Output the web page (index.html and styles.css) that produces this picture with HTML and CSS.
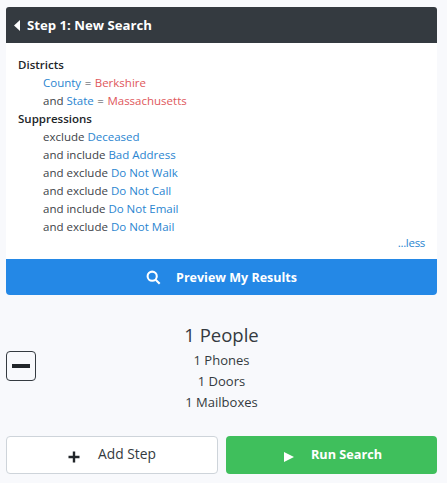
FILE: index.html
```html
<!DOCTYPE html>
<html lang="en">
<head>
<meta charset="utf-8">
<title>Step 1: New Search</title>
<link rel="stylesheet" href="styles.css">
</head>
<body>
<main class="page">
  <section class="card">
    <header class="card-head">
      <svg class="back" viewBox="0 0 6 11" aria-hidden="true"><path d="M6 0v11L0 5.5z"/></svg>
      <span>Step 1: New Search</span>
    </header>
    <div class="card-body">
      <div class="group-title">Districts</div>
      <div class="row"><a class="field">County</a><span class="eq">=</span><span class="val">Berkshire</span></div>
      <div class="row">and <a class="field">State</a><span class="eq">=</span><span class="val">Massachusetts</span></div>
      <div class="group-title">Suppressions</div>
      <div class="row">exclude <a class="field">Deceased</a></div>
      <div class="row">and include <a class="field">Bad Address</a></div>
      <div class="row">and exclude <a class="field">Do Not Walk</a></div>
      <div class="row">and exclude <a class="field">Do Not Call</a></div>
      <div class="row">and include <a class="field">Do Not Email</a></div>
      <div class="row">and exclude <a class="field">Do Not Mail</a></div>
      <div class="less"><a class="field">...less</a></div>
    </div>
    <button class="preview">
      <svg class="search" viewBox="0 0 16 16" aria-hidden="true"><circle cx="6.6" cy="6.6" r="4.9"/><path d="M10.3 10.3l4.3 4.3"/></svg>
      <span>Preview My Results</span>
    </button>
  </section>
  <section class="results">
    <button class="collapse" aria-label="Collapse"><span class="bar"></span></button>
    <div class="stats">
      <div class="people">1 People</div>
      <div class="stat">1 Phones</div>
      <div class="stat">1 Doors</div>
      <div class="stat">1 Mailboxes</div>
    </div>
  </section>
  <section class="actions">
    <button class="btn add">
      <svg class="plus" viewBox="0 0 12 12" aria-hidden="true"><path d="M6 .5v11M.5 6h11"/></svg>
      <span>Add Step</span>
    </button>
    <button class="btn run">
      <svg class="play" viewBox="0 0 10 10" aria-hidden="true"><path d="M0 0l10 5-10 5z"/></svg>
      <span>Run Search</span>
    </button>
  </section>
</main>
</body>
</html>
```
FILE: styles.css
```css
* { box-sizing: border-box; }
html, body { margin: 0; height: 100%; }
body {
  background: #f8f9fc;
  color: #343a40;
  font-family: "Open Sans", "Noto Sans", sans-serif;
  font-size: 11.5px;
  overflow: hidden;
}
button { font-family: inherit; cursor: pointer; }
.page { padding: 7px 10px 0 6px; }
.card-head {
  height: 36px;
  background: #343a40;
  color: #fff;
  font-size: 13.2px;
  font-weight: 700;
  display: flex;
  align-items: center;
  gap: 7px;
  padding-left: 8px;
  border-radius: 3px 3px 0 0;
}
.back { width: 6px; height: 11px; fill: #fff; }
.card-body {
  background: #fff;
  padding: 13px 12px 6px 12px;
  height: 216px;
  line-height: 18px;
}
.group-title { font-weight: 600; color: #212529; }
.row { padding-left: 25px; color: #3c4248; }
.field { color: #2a85d0; }
.eq { margin: 0 3.5px; }
.val { color: #e0575b; }
.less { text-align: right; margin-top: -2px; letter-spacing: -0.3px; }
.preview {
  width: 100%;
  height: 36px;
  background: #2488e6;
  border: 0;
  border-radius: 0 0 4px 4px;
  color: #fff;
  font-size: 12.5px;
  font-weight: 700;
  display: flex;
  align-items: center;
  justify-content: center;
  gap: 15px;
}
.search { width: 15px; height: 15px; fill: none; stroke: #fff; stroke-width: 2.2; }
.results { position: relative; padding-top: 28px; height: 141px; }
.collapse {
  position: absolute;
  left: 0;
  top: 56px;
  width: 30px;
  height: 30px;
  background: transparent;
  border: 1px solid #343a40;
  border-radius: 4px;
  padding: 0;
  display: flex;
  align-items: center;
  justify-content: center;
}
.bar { width: 18px; height: 4px; background: #212529; }
.stats { text-align: center; }
.people { font-size: 18.5px; line-height: 24px; margin-bottom: 3px; }
.stat { font-size: 13px; line-height: 21px; }
.actions { display: grid; grid-template-columns: 212px 211px; gap: 8px; }
.btn {
  height: 38px;
  border-radius: 4px;
  font-size: 13.8px;
  display: flex;
  align-items: center;
  justify-content: center;
  padding-bottom: 4px;
}
.add { background: #fff; border: 1px solid #ced4da; color: #343a40; gap: 18px; }
.plus { width: 12px; height: 12px; fill: none; stroke: #212529; stroke-width: 2.4; margin-top: 7px; }
.run { background: #3fbf5c; border: 0; color: #fff; font-weight: 700; font-size: 12.7px; gap: 17px; padding-left: 9px; }
.play { width: 10px; height: 10px; fill: #fff; margin-top: 6px; }
```
